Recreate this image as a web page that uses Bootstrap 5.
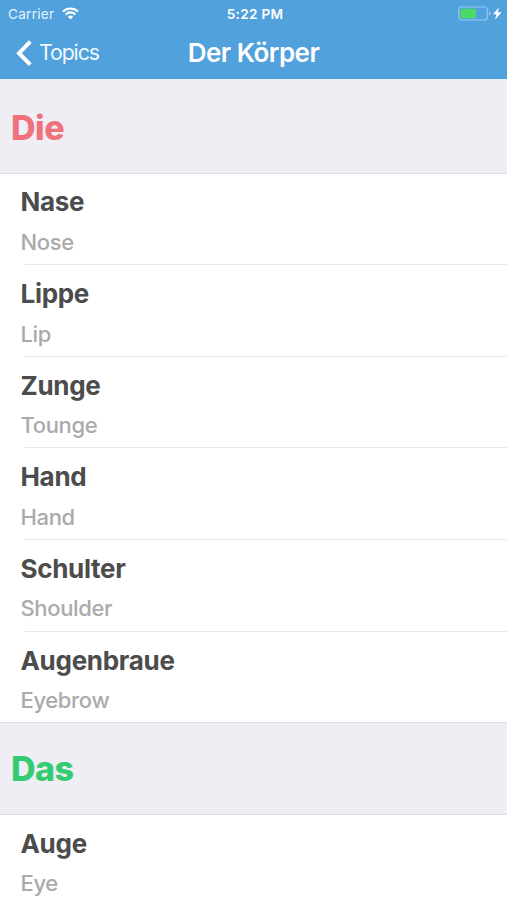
<!DOCTYPE html>
<html lang="de">
<head>
<meta charset="utf-8">
<meta name="viewport" content="width=device-width, initial-scale=1">
<title>Der Körper</title>
<link href="https://cdn.jsdelivr.net/npm/bootstrap@5.3.0/dist/css/bootstrap.min.css" rel="stylesheet">
<style>
  body { font-family: Inter, "Liberation Sans", sans-serif; height: 900px; overflow: hidden; background: #fff; }
  .app-header { background: #51a1dd; color: #fff; height: 81px; border-bottom: 2px solid #e6f2fa; }
  .status { height: 27px; font-size: 13.6px; line-height: 28px; padding: 0 5px 0 8px; }
  .status-side { flex: 1 1 0; }
  .carrier { color: #e4f2fd; letter-spacing: .25px; }
  .clock { font-weight: 600; letter-spacing: .3px; }
  .title-bar { height: 52px; line-height: 52px; padding-left: 16px; padding-right: 16px; }
  .back { font-size: 21.3px; letter-spacing: -1.1px; color: #eff8ff; }
  .back svg { margin-right: 7px; }
  .back span { line-height: 50px; padding-bottom: 2px; }
  .page-title { font-size: 26px; font-weight: 600; letter-spacing: -.5px; }
  .group-head { height: 92.67px; background: #efeef4; padding: 0 11px; font-size: 34px; font-weight: 800; letter-spacing: -.5px; line-height: 92px; border-bottom: 1px solid #dfdee2; }
  .group-first { height: 92.6px; line-height: 93px; }
  .group-next { border-top: 1px solid #dfdee2; margin-top: -1px !important; }
  .die { color: #ef727c; }
  .das { color: #35cb72; }
  .word { height: 91.63px; padding: 12.8px 20.5px 0; }
  .word:not(:last-child) { background: linear-gradient(#e9e9ea, #e9e9ea) 25px 100% / 100% 1px no-repeat; }
  .term { font-size: 26px; line-height: 32px; font-weight: 700; color: #4c4c4c; letter-spacing: -.3px; margin-bottom: 9.6px; }
  .gloss { font-size: 22px; line-height: 28px; font-weight: 500; color: #aaa; letter-spacing: -.35px; }
</style>
</head>
<body>
<header class="app-header">
  <div class="status d-flex align-items-center">
    <div class="status-side d-flex align-items-center">
      <span class="carrier">Carrier</span>
      <svg class="ms-2" width="17" height="13" viewBox="0 0 17 13" fill="none" stroke="#fff" stroke-width="2.1"><path d="M1 4.6a10.6 10.6 0 0 1 15 0M3.7 7.4a6.8 6.8 0 0 1 9.6 0"/><path d="M8.5 12.4 5.9 9.7a3.7 3.7 0 0 1 5.2 0z" fill="#fff" stroke="none"/></svg>
    </div>
    <span class="clock">5:22 PM</span>
    <div class="status-side d-flex align-items-center justify-content-end">
      <svg width="44" height="16" viewBox="0 0 44 16"><rect x=".7" y="1" width="28.6" height="13" rx="3" fill="none" stroke="#93c7ee" stroke-width="1.2"/><rect x="2.5" y="2.8" width="15.5" height="9.4" rx="1" fill="#4cd964"/><path d="M31 5.5v4a2.2 2.2 0 0 0 0-4z" fill="#a9d3f2"/><path d="M41 1.2 35 8.2h3.4l-1.3 5.6L43.6 6.2h-3.8z" fill="#fff"/></svg>
    </div>
  </div>
  <div class="title-bar d-flex align-items-center">
    <a class="back status-side d-flex align-items-center text-decoration-none" href="#"><svg width="16" height="27" viewBox="0 0 16 27" fill="none" stroke="#fff" stroke-width="4"><path d="M14.3 1.7 3 13.2l11.3 11.5"/></svg><span>Topics</span></a>
    <span class="page-title">Der Körper</span>
    <div class="status-side"></div>
  </div>
</header>
<main>
  <section>
    <h2 class="group-head group-first die m-0">Die</h2>
    <ul class="list-unstyled m-0">
      <li class="word"><div class="term">Nase</div><div class="gloss">Nose</div></li>
      <li class="word"><div class="term">Lippe</div><div class="gloss">Lip</div></li>
      <li class="word"><div class="term">Zunge</div><div class="gloss">Tounge</div></li>
      <li class="word"><div class="term">Hand</div><div class="gloss">Hand</div></li>
      <li class="word"><div class="term">Schulter</div><div class="gloss">Shoulder</div></li>
      <li class="word"><div class="term">Augenbraue</div><div class="gloss">Eyebrow</div></li>
    </ul>
  </section>
  <section>
    <h2 class="group-head group-next das m-0">Das</h2>
    <ul class="list-unstyled m-0">
      <li class="word"><div class="term">Auge</div><div class="gloss">Eye</div></li>
    </ul>
  </section>
</main>
<script src="https://cdn.jsdelivr.net/npm/bootstrap@5.3.0/dist/js/bootstrap.bundle.min.js"></script>
</body>
</html>
